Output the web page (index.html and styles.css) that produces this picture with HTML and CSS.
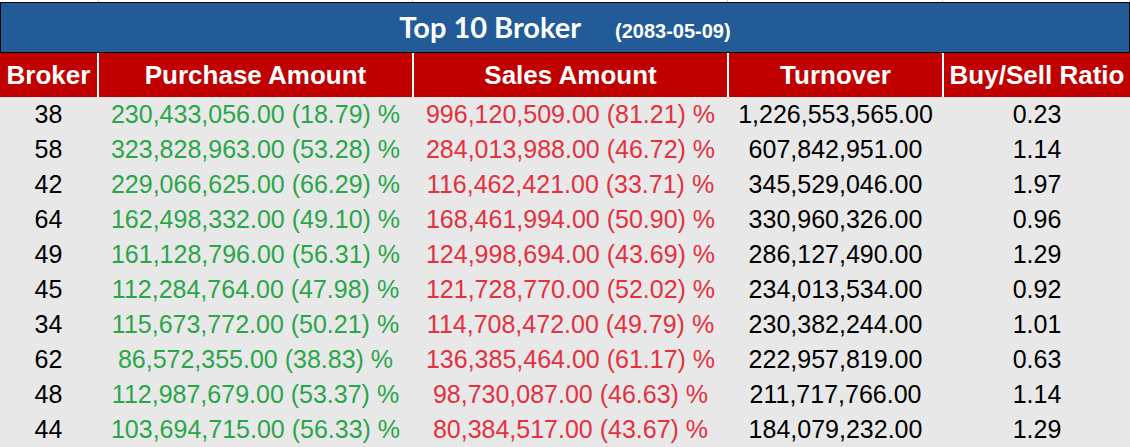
FILE: index.html
```html
<!DOCTYPE html>
<html>
<head>
<meta charset="utf-8">
<link rel="stylesheet" href="styles.css">
</head>
<body>
<div class="sheet">
  <div class="grid strip">
    <div></div><div></div><div></div><div></div><div></div>
  </div>
  <div class="title">
    <span class="title-main">Top 10 Broker</span>
    <span class="title-date">(2083-05-09)</span>
  </div>
  <div class="grid head">
    <div>Broker</div>
    <div>Purchase Amount</div>
    <div>Sales Amount</div>
    <div>Turnover</div>
    <div>Buy/Sell Ratio</div>
  </div>
  <div class="body">
    <div class="grid row"><div>38</div><div class="buy">230,433,056.00 (18.79) %</div><div class="sell">996,120,509.00 (81.21) %</div><div>1,226,553,565.00</div><div>0.23</div></div>
    <div class="grid row"><div>58</div><div class="buy">323,828,963.00 (53.28) %</div><div class="sell">284,013,988.00 (46.72) %</div><div>607,842,951.00</div><div>1.14</div></div>
    <div class="grid row"><div>42</div><div class="buy">229,066,625.00 (66.29) %</div><div class="sell">116,462,421.00 (33.71) %</div><div>345,529,046.00</div><div>1.97</div></div>
    <div class="grid row"><div>64</div><div class="buy">162,498,332.00 (49.10) %</div><div class="sell">168,461,994.00 (50.90) %</div><div>330,960,326.00</div><div>0.96</div></div>
    <div class="grid row"><div>49</div><div class="buy">161,128,796.00 (56.31) %</div><div class="sell">124,998,694.00 (43.69) %</div><div>286,127,490.00</div><div>1.29</div></div>
    <div class="grid row"><div>45</div><div class="buy">112,284,764.00 (47.98) %</div><div class="sell">121,728,770.00 (52.02) %</div><div>234,013,534.00</div><div>0.92</div></div>
    <div class="grid row"><div>34</div><div class="buy">115,673,772.00 (50.21) %</div><div class="sell">114,708,472.00 (49.79) %</div><div>230,382,244.00</div><div>1.01</div></div>
    <div class="grid row"><div>62</div><div class="buy">86,572,355.00 (38.83) %</div><div class="sell">136,385,464.00 (61.17) %</div><div>222,957,819.00</div><div>0.63</div></div>
    <div class="grid row"><div>48</div><div class="buy">112,987,679.00 (53.37) %</div><div class="sell">98,730,087.00 (46.63) %</div><div>211,717,766.00</div><div>1.14</div></div>
    <div class="grid row"><div>44</div><div class="buy">103,694,715.00 (56.33) %</div><div class="sell">80,384,517.00 (43.67) %</div><div>184,079,232.00</div><div>1.29</div></div>
  </div>
</div>
</body>
</html>
```

FILE: styles.css
```css
html, body {
  margin: 0;
  padding: 0;
  background: #e8e8e8;
}

.sheet {
  width: 1130px;
  height: 447px;
  overflow: hidden;
  font-family: "Liberation Sans", Arial, sans-serif;
}

.grid {
  display: grid;
  grid-template-columns: 97px 313px 313px 213px 1fr;
  column-gap: 2px;
}

.strip {
  height: 2px;
  background: #ffffff;
  column-gap: 0;
  grid-template-columns: 99px 314px 315px 215px 1fr;
}

.strip > div {
  border-right: 1px solid #d4d4d4;
}

.title {
  height: 49px;
  background: #225b97;
  border: 1px solid #000000;
  display: flex;
  justify-content: center;
  align-items: baseline;
  gap: 34px;
  color: #ffffff;
}

.title-main {
  font-family: Lato, "Liberation Sans", sans-serif;
  font-weight: 700;
  font-size: 29px;
  line-height: 48px;
}

.title-date {
  font-family: "Liberation Sans", Arial, sans-serif;
  font-weight: 700;
  font-size: 20px;
}

.head {
  background: #ffffff;
  height: 44px;
}

.head > div {
  background: #c00000;
  color: #ffffff;
  font-weight: 700;
  font-size: 26px;
  line-height: 44px;
  text-align: center;
  white-space: nowrap;
}

.body {
  background: #e8e8e8;
}

.row {
  height: 35px;
}

.row > div {
  font-size: 25px;
  line-height: 35px;
  text-align: center;
  color: #000000;
  white-space: nowrap;
}

.row > .buy {
  color: #2aa64a;
}

.row > .sell {
  color: #e4303f;
}
```
